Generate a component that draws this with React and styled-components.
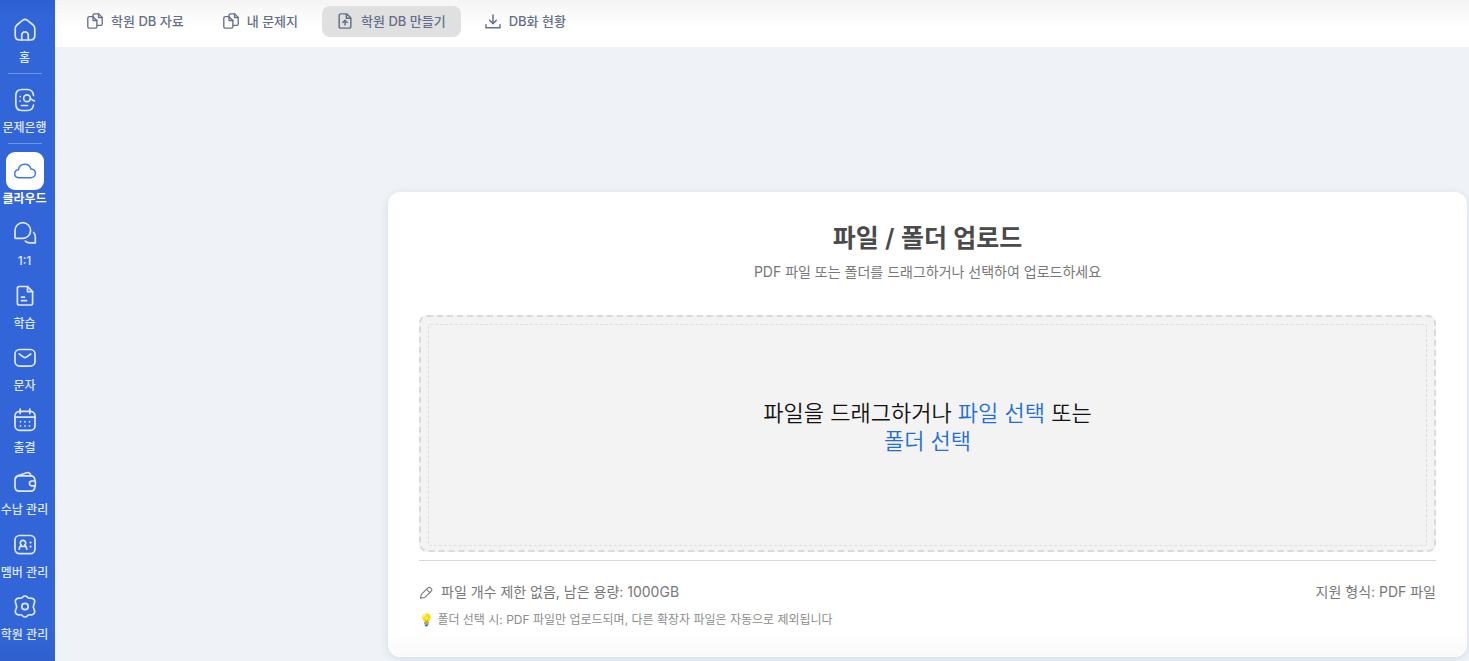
import React from "react";
import styled, { createGlobalStyle, css } from "styled-components";

const GlobalStyle = createGlobalStyle`
  *, *::before, *::after { box-sizing: border-box; }
  body {
    margin: 0;
    background: #eff3f8;
    font-family: Inter, "Noto Sans CJK KR", sans-serif;
    color: #111;
  }
  button { font: inherit; border: 0; margin: 0; cursor: pointer; }
`;

const Layout = styled.div`
  display: flex;
  min-height: 100vh;
`;

const Sidebar = styled.nav`
  flex: none;
  width: 55px;
  padding: 11px 6px 18px 0;
  background: linear-gradient(#2c5fd0, #3265d8 16px, #3265d8 calc(100% - 30px), #2f60cd);
  display: flex;
  flex-direction: column;
  gap: 7px;
`;

const SideDivider = styled.hr`
  width: 34px;
  height: 1px;
  margin: 0 auto;
  border: 0;
  background: #6e93e6;
`;

const SideGroup = styled.div`
  flex: 1;
  display: flex;
  flex-direction: column;
  justify-content: space-between;
  gap: 7px;
  padding-top: 1px;
`;

const SideItem = styled.a`
  display: flex;
  flex-direction: column;
  align-items: center;
  gap: 1px;
  color: ${(p) => (p.$active ? "#fff" : "#dfe8fc")};
  font-size: 12px;
  line-height: 16px;
  font-weight: ${(p) => (p.$active ? 700 : 500)};
  white-space: nowrap;
  text-decoration: none;
`;

const SideTile = styled.span`
  display: flex;
  align-items: center;
  justify-content: center;
  width: 38px;
  height: 38px;
  border-radius: 9px;
  ${(p) =>
    p.$active &&
    css`
      background: #fff;
      color: #3f76ea;
    `}
`;

const Content = styled.div`
  flex: 1;
  min-width: 0;
  display: flex;
  flex-direction: column;
`;

const TabBar = styled.header`
  display: flex;
  gap: 9px;
  height: 47px;
  padding: 6px 17px 10px;
  background: linear-gradient(#f5f5f5, #fff 28px);
`;

const Tab = styled.button`
  display: flex;
  align-items: center;
  gap: 8px;
  padding: 0 15px 1px;
  border-radius: 8px;
  background: ${(p) => (p.$active ? "#e0e0e0" : "transparent")};
  color: #64708a;
  font-size: 13px;
  line-height: 20px;
  font-weight: 500;
  white-space: nowrap;
`;

const Main = styled.main`
  padding: 145px 2px 4px 333px;
`;

const Card = styled.section`
  padding: 30px 30px 27px;
  border: 1px solid #fff;
  border-radius: 12px;
  background: linear-gradient(#fff calc(100% - 24px), #f9f9fa);
  background-origin: border-box;
  box-shadow: 0 2px 8px rgba(60, 80, 120, 0.14);
`;

const Title = styled.h1`
  margin: 0 0 8px;
  color: #4a4a4a;
  font-size: 25px;
  line-height: 30px;
  font-weight: 600;
  text-align: center;
`;

const Subtitle = styled.p`
  margin: 0 0 32px;
  color: #777;
  font-size: 14px;
  line-height: 22px;
  text-align: center;
`;

const DropZone = styled.div`
  display: flex;
  height: 237px;
  padding: 7px 7px 4px;
  border: 2px dashed #d9dadd;
  border-radius: 8px;
  background: #f3f3f3;
`;

const DropInner = styled.div`
  flex: 1;
  display: flex;
  align-items: center;
  justify-content: center;
  padding-bottom: 16px;
  border: 1px dashed #dedede;
  border-radius: 2px;
`;

const DropText = styled.p`
  margin: 0;
  font-size: 22px;
  line-height: 28px;
  font-weight: 350;
  text-align: center;
`;

const PickButton = styled.button`
  padding: 0;
  background: none;
  color: #1f6fd6;
`;

const Footer = styled.footer`
  margin-top: 8px;
  padding-top: 20px;
  border-top: 1px solid #d8d8d8;
`;

const InfoRow = styled.div`
  display: flex;
  justify-content: space-between;
  color: #777;
  font-size: 14px;
  line-height: 22px;
`;

const InfoLabel = styled.span`
  display: flex;
  align-items: center;
  gap: 8px;
`;

const Hint = styled.p`
  margin: 8px 0 0;
  color: #8c8c8c;
  font-size: 12px;
  line-height: 18px;
`;

const Svg = ({ size = 24, sw = 1.7, children }) => (
  <svg
    width={size}
    height={size}
    viewBox="0 0 24 24"
    fill="none"
    stroke="currentColor"
    strokeWidth={sw}
    strokeLinecap="round"
    strokeLinejoin="round"
    aria-hidden="true"
  >
    {children}
  </svg>
);

const HomeIcon = () => (
  <Svg>
    <path d="M2.2 10.6c0-1.5.5-2.6 1.7-3.6l5.6-4.600c1.500-1.200 3.500-1.200 5 0L20.100 7c1.200 1 1.700 2.100 1.700 3.600v7c0 2.900-1.500 4.400-4.400 4.400H6.600c-2.900 0-4.400-1.500-4.400-4.400Z" />
    <path d="M8.700 22v-4.800a3.300 3.300 0 0 1 6.600 0V22" />
  </Svg>
);

const BankIcon = () => (
  <Svg>
    <path d="M20.500 7.500C20 3.600 18.200 1.500 14.500 1.500H9C4.700 1.500 2.800 3.700 2.800 8v8c0 4.300 1.900 6.500 6.200 6.500h5.500c3.700 0 5.500-2.100 6-5.500" />
    <circle cx="14" cy="10.200" r="3.400" />
    <path d="M17.200 10.800c1.600 0 1.800 2 4.300 2M8.500 17.500h6M7.200 8.500v.1M7.200 13v.1" />
  </Svg>
);

const CloudIcon = () => (
  <Svg sw={1.5}>
    <path d="M6.300 18.700C3.600 18.700 1.700 17 1.700 14.700c0-2.100 1.500-3.700 3.700-4C6 7.500 8.500 5.300 11.700 5.300c3.100 0 5.500 1.900 6.300 4.700 2.500.2 4.400 1.900 4.400 4.300 0 2.500-2 4.400-4.600 4.400Z" />
  </Svg>
);

const ChatIcon = () => (
  <Svg>
    <path d="M2 17V9.500a7.800 7.800 0 1 1 7.800 7.800H2.700A.7.700 0 0 1 2 17Z" />
    <path d="M20.700 11.500c1.100 1.200 1.600 2.500 1.600 4.200v6.200h-5.600c-1.900 0-3.300-.6-4.400-1.700" />
  </Svg>
);

const StudyIcon = () => (
  <Svg>
    <path d="M14.500 2.500H6.200C5 2.500 4.400 3.100 4.400 4.300v14.900c0 1.200.6 1.800 1.800 1.800h11.600c1.200 0 1.800-.6 1.800-1.800V7.700Z" />
    <path d="M14.500 2.500v5.200h5.100M8.500 13.200h3M8.500 16.700h5" />
  </Svg>
);

const MailIcon = () => (
  <Svg>
    <rect x="2" y="3.500" width="20" height="16.600" rx="4.600" />
    <path d="m6.300 8 3.500 2.700c1.300 1 3.100 1 4.400 0L17.700 8" />
  </Svg>
);

const CalendarIcon = () => (
  <Svg>
    <rect x="2" y="3.300" width="20" height="19" rx="4.600" />
    <path d="M2.200 9.200h19.600M7.200 1v4.500M16.800 1v4.500" />
    <path d="M7.500 13.700v.1M12 13.700v.1M16.500 13.700v.1M7.500 17.900v.1M12 17.900v.1M16.500 17.900v.1" />
  </Svg>
);

const WalletIcon = () => (
  <Svg>
    <path d="M21.800 11V10c0-2.700-1.500-4.200-4.400-4.200H6.400C3.500 5.800 2 7.300 2 10.200v6.600c0 2.900 1.500 4.400 4.400 4.400h11c2.900 0 4.400-1.500 4.400-4.400v-1" />
    <path d="M2.200 8.900C2.500 7 3.500 6.100 5.300 5.500l8.500-2.700c2.200-.6 3.700.4 4.100 3M22.300 11h-3.400a2.400 2.400 0 0 0 0 4.900h3.400Z" />
  </Svg>
);

const MemberIcon = () => (
  <Svg>
    <rect x="2" y="2.500" width="20" height="18.200" rx="4.600" />
    <path d="M6.200 16.200c.2-2 .8-3.300 2-4.200a2.700 2.700 0 1 1 3.600 0c1.200.9 1.800 2.200 2 4.200M8.200 13.300h3.600" />
    <path strokeWidth="2.200" d="M17.600 9.500v.1M17.600 13.500v.1" />
  </Svg>
);

const GearIcon = () => (
  <Svg>
    <path d="M9.600 2.200c1.500-1.600 3.300-1.600 4.800 0 .8.900 1.500 1.200 2.700 1 2.400-.3 4.400.9 4.600 3 .1.900-.1 1.600-.6 2.400-.9 1.900-.9 3.900 0 5.800.5.800.7 1.500.6 2.400-.2 2.100-2.200 3.300-4.600 3-1.200-.2-1.900.1-2.700 1-1.500 1.600-3.300 1.600-4.800 0-.8-.9-1.500-1.200-2.700-1-2.400.3-4.400-.9-4.600-3-.1-.9.100-1.600.6-2.400.9-1.900.9-3.900 0-5.800-.5-.8-.7-1.500-.6-2.400.2-2.100 2.200-3.300 4.600-3 1.200.2 1.900-.1 2.700-1Z" />
    <circle cx="12" cy="11.500" r="3.200" />
  </Svg>
);

const FilesIcon = () => (
  <Svg size={16} sw={2}>
    <path d="M9 5.500H3.200c-1.400 0-2 .6-2 2v13.200c0 1.400.6 2 2 2h9.600c1.400 0 2-.6 2-2V11.200Z" />
    <path d="M9 5.500v5.700h5.800" />
    <path d="M9 5V3.300c0-1.400.6-2 2-2h6.500l5.300 5.300v9.900c0 1.400-.6 2-2 2h-5.500" />
    <path d="M17.300 1.500v5.300h5.300" />
  </Svg>
);

const FileUpIcon = () => (
  <Svg size={16} sw={2.2}>
    <path d="M14.500 1.300H6.200c-2 0-3 1-3 3v15.400c0 2 1 3 3 3h11.600c2 0 3-1 3-3V7.600Z" />
    <path d="M14 1.800V8h6.300M12 18v-6.500M8.800 14.200l3.200-3.200 3.200 3.200" />
  </Svg>
);

const DownloadIcon = () => (
  <Svg size={16} sw={2.2}>
    <path d="M12 3v12.500M7 11l5 5 5-5M1.500 17.500V22h21v-4.500" />
  </Svg>
);

const PencilIcon = () => (
  <Svg size={14} sw={1.8}>
    <path d="M2.500 22.500 4 16.200 15.300 5c1.300-1.300 3-1.300 4.300 0l1.400 1.400c1.300 1.300 1.300 3 0 4.300L9.800 21.500Z" />
    <path d="m13 7.500 5.500 5.500" />
  </Svg>
);

const topItems = [
  { label: "홈", Icon: HomeIcon },
  { label: "문제은행", Icon: BankIcon },
];

const groupItems = [
  { label: "클라우드", Icon: CloudIcon, active: true },
  { label: "1:1", Icon: ChatIcon },
  { label: "학습", Icon: StudyIcon },
  { label: "문자", Icon: MailIcon },
  { label: "출결", Icon: CalendarIcon },
  { label: "수납 관리", Icon: WalletIcon },
  { label: "멤버 관리", Icon: MemberIcon },
  { label: "학원 관리", Icon: GearIcon },
];

const tabs = [
  { label: "학원 DB 자료", Icon: FilesIcon },
  { label: "내 문제지", Icon: FilesIcon },
  { label: "학원 DB 만들기", Icon: FileUpIcon, active: true },
  { label: "DB화 현황", Icon: DownloadIcon },
];

const NavItem = ({ label, Icon, active }) => (
  <SideItem href="#" $active={active} aria-current={active ? "page" : undefined}>
    <SideTile $active={active}>
      <Icon />
    </SideTile>
    {label}
  </SideItem>
);

export default function App() {
  return (
    <>
      <GlobalStyle />
      <Layout>
        <Sidebar>
          {topItems.map((item) => (
            <React.Fragment key={item.label}>
              <NavItem {...item} />
              <SideDivider />
            </React.Fragment>
          ))}
          <SideGroup>
            {groupItems.map((item) => (
              <NavItem key={item.label} {...item} />
            ))}
          </SideGroup>
        </Sidebar>
        <Content>
          <TabBar>
            {tabs.map(({ label, Icon, active }) => (
              <Tab key={label} type="button" $active={active}>
                <Icon />
                {label}
              </Tab>
            ))}
          </TabBar>
          <Main>
            <Card>
              <Title>파일 / 폴더 업로드</Title>
              <Subtitle>PDF 파일 또는 폴더를 드래그하거나 선택하여 업로드하세요</Subtitle>
              <DropZone>
                <DropInner>
                  <DropText>
                    파일을 드래그하거나 <PickButton type="button">파일 선택</PickButton> 또는
                    <br />
                    <PickButton type="button">폴더 선택</PickButton>
                  </DropText>
                </DropInner>
              </DropZone>
              <Footer>
                <InfoRow>
                  <InfoLabel>
                    <PencilIcon />
                    파일 개수 제한 없음, 남은 용량: 1000GB
                  </InfoLabel>
                  <span>지원 형식: PDF 파일</span>
                </InfoRow>
                <Hint>💡 폴더 선택 시: PDF 파일만 업로드되며, 다른 확장자 파일은 자동으로 제외됩니다</Hint>
              </Footer>
            </Card>
          </Main>
        </Content>
      </Layout>
    </>
  );
}
